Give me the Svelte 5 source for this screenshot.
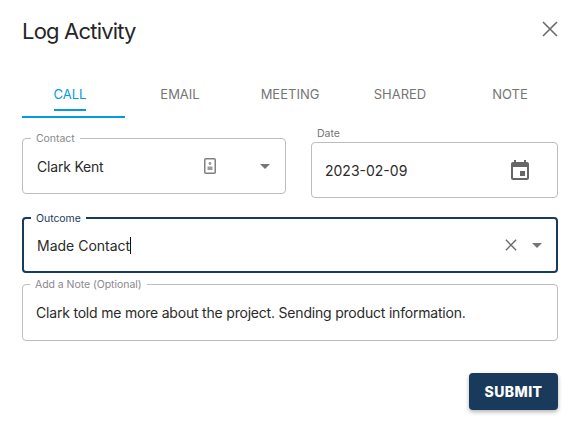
<script lang="ts">
    // STATE
    let activeTab = $state('CALL');
    const tabs = ['CALL', 'EMAIL', 'MEETING', 'SHARED', 'NOTE'];

    let contact = $state('Clark Kent');
    let date = $state('2023-02-09');
    let outcome = $state('Made Contact');
    let note = $state('Clark told me more about the project. Sending product information.');
</script>

<div class="dialog">

    <header>
        <h1>Log Activity</h1>
        <button class="close" aria-label="Close">
            <svg width="16" height="16" viewBox="0 0 16 16"><path d="M1 1l14 14M15 1L1 15" /></svg>
        </button>
    </header>

    <div class="tabs">
        <div class="tab-row">
            {#each tabs as tab}
                <button class="tab" class:active={activeTab === tab} onclick={() => activeTab = tab}>
                    <span>{tab}</span>
                </button>
            {/each}
        </div>
    </div>

    <div class="top-row">

        <fieldset class="field contact">
            <legend>Contact</legend>
            <input bind:value={contact} />
            <svg class="card" width="12" height="16" viewBox="0 0 12 16">
                <rect x="0.75" y="0.75" width="10.5" height="14.5" rx="1" />
                <circle cx="6" cy="5.5" r="1.4" />
                <path d="M3.5 12V8.5h5V12z" />
            </svg>
            <span class="arrow"></span>
        </fieldset>

        <div class="date">
            <span class="date-label">Date</span>
            <div class="date-box">
                <input bind:value={date} />
                <svg width="24" height="24" viewBox="0 0 24 24">
                    <path d="M19 4h-1V2h-2v2H8V2H6v2H5c-1.1 0-2 .9-2 2v14c0 1.1.9 2 2 2h14c1.1 0 2-.9 2-2V6c0-1.1-.9-2-2-2zm0 16H5V9h14v11zm-7-7h5v5h-5z" />
                </svg>
            </div>
        </div>

    </div>

    <fieldset class="field outcome">
        <legend>Outcome</legend>
        <div class="value">{outcome}<i class="caret"></i></div>
        <svg class="clear" width="14" height="14" viewBox="0 0 14 14"><path d="M1 1l12 12M13 1L1 13" /></svg>
        <span class="arrow"></span>
    </fieldset>

    <fieldset class="field note">
        <legend>Add a Note (Optional)</legend>
        <input bind:value={note} />
    </fieldset>

    <div class="actions">
        <button class="submit">SUBMIT</button>
    </div>

</div>

<style>

    :global(body) {
        background: #fff;
    }

    .dialog {
        box-sizing: border-box;
        width: 574px;
        height: 421px;
        padding: 16px 16px 0 22px;
        font-family: Inter, "Liberation Sans", sans-serif;
        color: #2b2b2b;
        overflow: hidden;
    }

    header {
        display: flex;
        justify-content: space-between;
        align-items: center;
        height: 30px;
    }

    h1 {
        margin: 0;
        font-size: 22px;
        font-weight: 400;
        letter-spacing: -0.8px;
        color: #262626;
    }

    button {
        font-family: inherit;
        border: none;
        background: none;
        padding: 0;
        cursor: pointer;
    }

    .close {
        display: flex;
        margin-bottom: 4px;
    }

    .close path, .clear path {
        fill: none;
        stroke: #6b6b6b;
        stroke-width: 1.6;
    }

    .tabs {
        margin-top: 25px;
        overflow: hidden;
    }

    .tab-row {
        display: flex;
        margin: 0 -7px;
    }

    .tab {
        display: flex;
        flex-direction: column;
        align-items: center;
        justify-content: flex-start;
        box-sizing: border-box;
        width: 110px;
        height: 47px;
        flex: none;
        padding-top: 11px;
        font-size: 13px;
        color: #757575;
        border-bottom: 2px solid transparent;
    }

    .tab span {
        display: block;
        height: 27px;
        line-height: 24px;
        border-bottom: 2px solid transparent;
    }

    .tab.active {
        color: #039be5;
        border-bottom-color: #039be5;
    }

    .tab.active span {
        border-bottom-color: #039be5;
    }

    .top-row {
        display: flex;
        gap: 25px;
        margin-top: 13px;
    }

    fieldset {
        margin: 0;
        padding: 0;
        min-width: 0;
        box-sizing: border-box;
    }

    .field {
        display: flex;
        align-items: center;
        border: 1px solid #bdbdbd;
        border-radius: 4px;
        padding: 0 14px;
    }

    legend {
        font-size: 10.5px;
        line-height: 12px;
        letter-spacing: -0.05px;
        color: #8a8a8a;
        padding: 2px 5px 0;
        margin-left: -6px;
    }

    input {
        flex: 1;
        min-width: 0;
        width: 0;
        border: none;
        outline: none;
        background: none;
        padding: 0;
        font-family: inherit;
        font-size: 14px;
        color: #2b2b2b;
    }

    .contact {
        width: 264px;
        height: 63px;
        flex: none;
        padding-right: 15px;
    }

    .contact input {
        margin-top: -6px;
        letter-spacing: -0.2px;
    }

    .card {
        margin-top: -6px;
        margin-right: 44px;
    }

    .card rect {
        fill: none;
        stroke: #808080;
        stroke-width: 1.5;
    }

    .card circle, .card path {
        fill: #9a9a9a;
    }

    .arrow {
        width: 0;
        height: 0;
        border-left: 5px solid transparent;
        border-right: 5px solid transparent;
        border-top: 5px solid #757575;
    }

    .contact .arrow {
        margin-top: -6px;
    }

    .date {
        flex: 1;
        min-width: 0;
        margin-top: -4px;
    }

    .date-label {
        display: block;
        font-size: 10.5px;
        line-height: 14px;
        height: 15px;
        padding-left: 6px;
        color: #757575;
    }

    .date-box {
        display: flex;
        align-items: center;
        box-sizing: border-box;
        height: 56px;
        border: 1px solid #bdbdbd;
        border-radius: 4px;
        padding: 0 25px 0 13px;
    }

    .date-box svg path {
        fill: #666;
    }

    .outcome {
        height: 62px;
        margin-top: 13px;
        border: 2px solid #1a3a5c;
        padding: 0 14px 0 13px;
    }

    .outcome legend {
        color: #1a3a5c;
    }

    .value {
        flex: 1;
        font-size: 14px;
        margin-top: -6px;
    }

    .caret {
        display: inline-block;
        width: 1px;
        height: 17px;
        background: #111;
        vertical-align: -3px;
    }

    .clear {
        width: 12px;
        height: 12px;
        margin-top: -6px;
        margin-right: 15px;
    }

    .outcome .arrow {
        margin-top: -6px;
    }

    .note {
        height: 64px;
        margin-top: 4px;
        padding-left: 13px;
    }

    .note input {
        margin-top: -6px;
        letter-spacing: -0.2px;
    }

    .actions {
        display: flex;
        justify-content: flex-end;
        margin-top: 32px;
    }

    .submit {
        width: 89px;
        height: 37px;
        background: #1a3a5c;
        color: #fff;
        font-size: 14px;
        font-weight: 800;
        letter-spacing: 0.4px;
        border-radius: 4px;
        box-shadow: 0 2px 4px rgba(0, 0, 0, 0.3);
    }

</style>
